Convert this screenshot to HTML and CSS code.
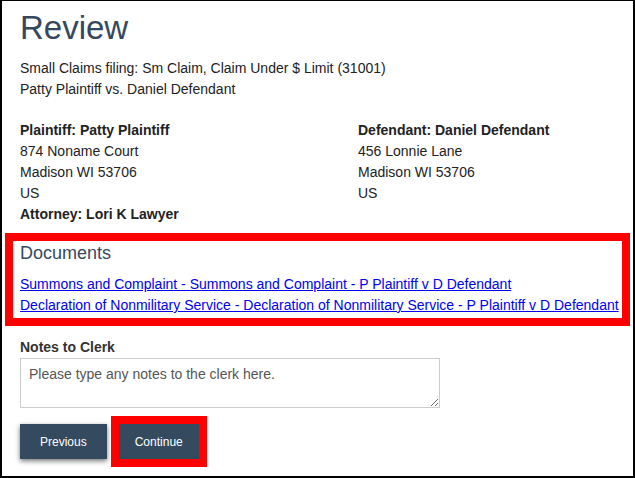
FILE: index.html
```html
<!DOCTYPE html>
<html lang="en">
<head>
    <meta charset="UTF-8">
    <meta name="viewport" content="width=device-width, initial-scale=1.0">
    <title>Review</title>
    <link rel="stylesheet" href="styles.css">
</head>
<body>
    <div class="page">
        <h1 class="page-title">Review</h1>
        <p class="filing">
            Small Claims filing: Sm Claim, Claim Under $ Limit (31001)<br>
            Patty Plaintiff vs. Daniel Defendant
        </p>

        <div class="parties">
            <div class="party">
                <strong>Plaintiff: Patty Plaintiff</strong>
                <div>874 Noname Court</div>
                <div>Madison WI 53706</div>
                <div>US</div>
                <strong>Attorney: Lori K Lawyer</strong>
            </div>
            <div class="party">
                <strong>Defendant: Daniel Defendant</strong>
                <div>456 Lonnie Lane</div>
                <div>Madison WI 53706</div>
                <div>US</div>
            </div>
        </div>

        <div class="documents highlight">
            <h2>Documents</h2>
            <div class="doc-links">
                <a href="#">Summons and Complaint - Summons and Complaint - P Plaintiff v D Defendant</a>
                <a href="#">Declaration of Nonmilitary Service - Declaration of Nonmilitary Service - P Plaintiff v D Defendant</a>
            </div>
        </div>

        <label class="notes-label" for="notes">Notes to Clerk</label>
        <textarea id="notes" class="notes" placeholder="Please type any notes to the clerk here."></textarea>

        <div class="actions">
            <button class="btn btn-prev">Previous</button>
            <button class="btn btn-next highlight-btn">Continue</button>
        </div>
    </div>
</body>
</html>
```

FILE: styles.css
```css
html, body {
    margin: 0;
    background: #fff;
}
body {
    font-family: "Liberation Sans", Arial, sans-serif;
    font-size: 14px;
    line-height: 21px;
    color: #222;
}
.page {
    box-sizing: border-box;
    height: 478px;
    border: 2px solid #000;
    border-top-width: 1px;
    padding: 0 18px;
    overflow: hidden;
}
.page-title {
    margin: 8px 0 0;
    font-size: 33px;
    line-height: 38px;
    font-weight: normal;
    color: #34495e;
}
.filing {
    margin: 11px 0 0;
}
.parties {
    display: grid;
    grid-template-columns: 338px 1fr;
    margin-top: 20px;
}
.party strong {
    display: block;
}
.documents {
    margin: 8px -15px 0 -15px;
    padding: 2px 0 2px 7px;
}
.highlight {
    border: 8px solid #f00;
}
.documents h2 {
    margin: 0;
    font-size: 18px;
    line-height: 20px;
    font-weight: normal;
    color: #34495e;
}
.doc-links {
    display: flex;
    flex-direction: column;
    align-items: flex-start;
    margin-top: 11px;
    white-space: nowrap;
}
.doc-links a {
    color: #0000ee;
    text-decoration: underline;
}
.notes-label {
    display: block;
    margin-top: 11px;
    font-weight: bold;
    color: #333;
}
.notes {
    display: block;
    box-sizing: border-box;
    width: 420px;
    height: 50px;
    margin: 0;
    padding: 5px 8px;
    border: 1px solid #ccc;
    font-family: inherit;
    font-size: 14px;
    line-height: 21px;
    color: #222;
}
.notes::placeholder {
    color: #555;
}
.actions {
    display: flex;
    gap: 12px;
    margin-top: 16px;
}
.btn {
    height: 35px;
    padding: 0 20px;
    border: none;
    background: #344a5f;
    color: #fff;
    font-family: inherit;
    font-size: 12px;
    box-shadow: 0 2px 5px rgba(0, 0, 0, 0.55);
    cursor: pointer;
}
.btn-next {
    padding: 0 16px;
}
.highlight-btn {
    outline: 8px solid #f00;
    box-shadow: none;
}
```
